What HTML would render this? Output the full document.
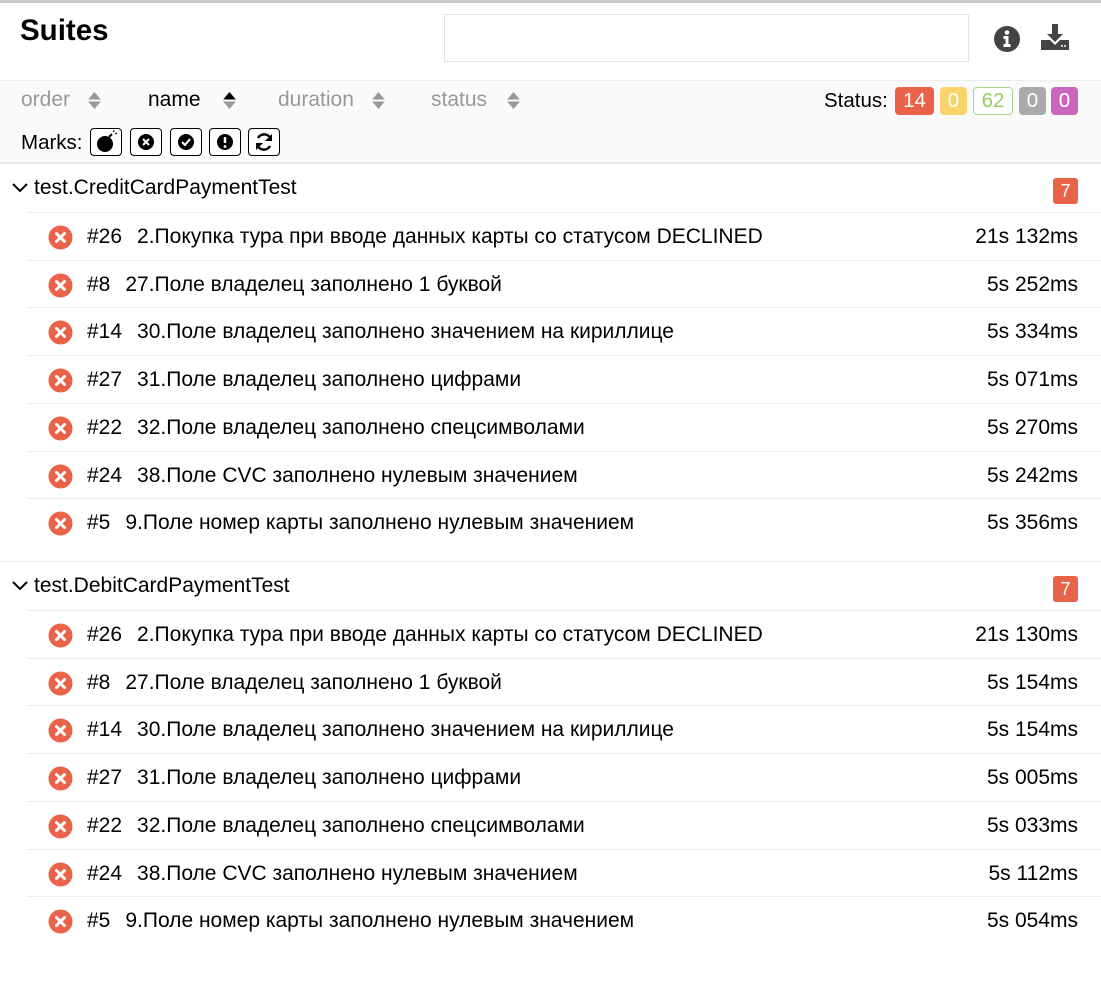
<!DOCTYPE html>
<html><head><meta charset="utf-8"><style>
*{box-sizing:border-box;margin:0;padding:0}
body{width:1101px;height:982px;background:#fff;font-family:"Liberation Sans",Arial,sans-serif;color:#000;position:relative;overflow:hidden}
.abs{position:absolute}
.top{left:0;top:0;width:1101px;height:3px;background:#c8c8c8}
h1{position:absolute;left:20px;top:14px;font-size:29.5px;font-weight:bold}
.search{left:444px;top:14px;width:525px;height:48px;border:1px solid #e2e2e2}
.bar{left:0;top:80px;width:1101px;height:83px;background:#fafafa;border-top:1px solid #ececec;border-bottom:1px solid #e6e6e6}
.sort{top:88px;font-size:21px;color:#999}
.arr{display:inline-block;width:13px;vertical-align:middle;margin-left:18px}
.st{top:89px;left:824px;font-size:20.5px}
.b{position:absolute;top:87px;height:28px;border-radius:4px;color:#fff;font-size:20.5px;text-align:center;line-height:28px}
.mk{position:absolute;top:128px;width:32px;height:28px;border:1px solid #000;border-radius:4px;background:#fff}
.suite{left:0;width:1101px;height:50px;border-top:1px solid #ececec}
.suite .n{position:absolute;left:34px;top:12px;font-size:21px}
.suite .cnt{position:absolute;left:1053px;top:14px;width:25px;height:26px;background:#e9634b;color:#fff;border-radius:3px;text-align:center;line-height:26px;font-size:18px}
.row{left:27px;width:1074px;height:48px;border-top:1px solid #ececec;font-size:21px}
.row .t{position:absolute;left:60px;top:12px;white-space:pre}
.row .t span{margin-left:15px}
.row .d{position:absolute;right:23px;top:12px}
.row svg{position:absolute;left:21px;top:12px}
</style></head><body>
<div class="abs top"></div>
<h1>Suites</h1>
<div class="abs search"></div>
<svg class="abs" style="left:993px;top:25px" width="28" height="28" viewBox="0 0 28 28"><circle cx="14" cy="14" r="13" fill="#444"/><circle cx="14" cy="7.5" r="2.3" fill="#fff"/><path d="M10.5 11h5v8h2v3h-7v-3h2v-5h-2z" fill="#fff"/></svg>
<svg class="abs" style="left:1040px;top:23px" width="30" height="28" viewBox="0 0 30 28"><path d="M12 1h6v10h5l-8 8-8-8h5z" fill="#444"/><path d="M1 17h9l5 5 5-5h9v10H1z" fill="#444"/><circle cx="22" cy="23" r="1" fill="#fff"/><circle cx="25" cy="23" r="1" fill="#fff"/></svg>
<div class="abs bar"></div>
<div class="abs sort" style="left:21px">order<svg class="arr" viewBox="0 0 12 18" height="19"><path d="M6 1l6 7H0z M6 17l6-7H0z" fill="#999"/></svg></div>
<div class="abs sort" style="left:148px;color:#000">name<svg class="arr" style="margin-left:22px" viewBox="0 0 12 18" height="19"><path d="M6 1l6 7H0z" fill="#000"/><path d="M6 17l6-7H0z" fill="#999"/></svg></div>
<div class="abs sort" style="left:278px">duration<svg class="arr" viewBox="0 0 12 18" height="19"><path d="M6 1l6 7H0z M6 17l6-7H0z" fill="#999"/></svg></div>
<div class="abs sort" style="left:431px">status<svg class="arr" style="margin-left:20px" viewBox="0 0 12 18" height="19"><path d="M6 1l6 7H0z M6 17l6-7H0z" fill="#999"/></svg></div>
<div class="abs st">Status:</div>
<div class="b" style="left:895px;width:39px;background:#e9634b">14</div>
<div class="b" style="left:940px;width:27px;background:#f9d46c">0</div>
<div class="b" style="left:973px;width:40px;background:#fff;border:1px solid #a7d48b;color:#97cc64;line-height:26px">62</div>
<div class="b" style="left:1019px;width:27px;background:#aaa">0</div>
<div class="b" style="left:1051px;width:27px;background:#c867bd">0</div>
<div class="abs" style="left:21px;top:131px;font-size:20.5px">Marks:</div>
<div class="mk" style="left:90px"><svg width="30" height="26" viewBox="0 0 30 26"><circle cx="14" cy="15" r="8" fill="#000"/><path d="M18 8l3-3" stroke="#000" stroke-width="2"/><path d="M22 3l1-1M24 5l2-1M23 2l0-1" stroke="#000" stroke-width="1"/></svg></div>
<div class="mk" style="left:130px"><svg width="30" height="26" viewBox="0 0 30 26"><circle cx="15" cy="13" r="8" fill="#000"/><path d="M12 10l6 6M18 10l-6 6" stroke="#fff" stroke-width="2"/></svg></div>
<div class="mk" style="left:170px"><svg width="30" height="26" viewBox="0 0 30 26"><circle cx="15" cy="13" r="8" fill="#000"/><path d="M11 13l3 3 5-6" stroke="#fff" stroke-width="2" fill="none"/></svg></div>
<div class="mk" style="left:209px"><svg width="30" height="26" viewBox="0 0 30 26"><circle cx="15" cy="13" r="8" fill="#000"/><path d="M15 8v6" stroke="#fff" stroke-width="2.5"/><circle cx="15" cy="17.5" r="1.4" fill="#fff"/></svg></div>
<div class="mk" style="left:248px"><svg width="30" height="26" viewBox="0 0 30 26"><path d="M22 11a7 7 0 0 0-13-2M8 15a7 7 0 0 0 13 2" stroke="#000" stroke-width="2.5" fill="none"/><path d="M23 5v7h-7zM7 21v-7h7z" fill="#000"/></svg></div>

<div id="c"></div>
<script>
var X='<svg width="25" height="25" viewBox="0 0 25 25"><circle cx="12.5" cy="12.5" r="12" fill="#e9634b"/><path d="M8.5 8.5l8 8M16.5 8.5l-8 8" stroke="#fff" stroke-width="3" stroke-linecap="round"/></svg>';
var names=[["#26","2.Покупка тура при вводе данных карты со статусом DECLINED"],["#8","27.Поле владелец заполнено 1 буквой"],["#14","30.Поле владелец заполнено значением на кириллице"],["#27","31.Поле владелец заполнено цифрами"],["#22","32.Поле владелец заполнено спецсимволами"],["#24","38.Поле CVC заполнено нулевым значением"],["#5","9.Поле номер карты заполнено нулевым значением"]];
var suites=[["test.CreditCardPaymentTest",163,["21s 132ms","5s 252ms","5s 334ms","5s 071ms","5s 270ms","5s 242ms","5s 356ms"]],["test.DebitCardPaymentTest",561,["21s 130ms","5s 154ms","5s 154ms","5s 005ms","5s 033ms","5s 112ms","5s 054ms"]]];
var h='';
suites.forEach(function(s){
h+='<div class="abs suite" style="top:'+s[1]+'px"><svg style="position:absolute;left:12px;top:19px" width="16" height="10" viewBox="0 0 16 10"><path d="M1 1l7 7 7-7" stroke="#000" stroke-width="2" fill="none"/></svg><div class="n">'+s[0]+'</div><div class="cnt">7</div></div>';
for(var i=0;i<7;i++){var top=s[1]+49+i*47.7;
h+='<div class="abs row" style="top:'+top+'px">'+X+'<div class="t">'+names[i][0]+'<span>'+names[i][1]+'</span></div><div class="d">'+s[2][i]+'</div></div>';}
});
document.getElementById('c').innerHTML=h;
</script>
</body></html>
